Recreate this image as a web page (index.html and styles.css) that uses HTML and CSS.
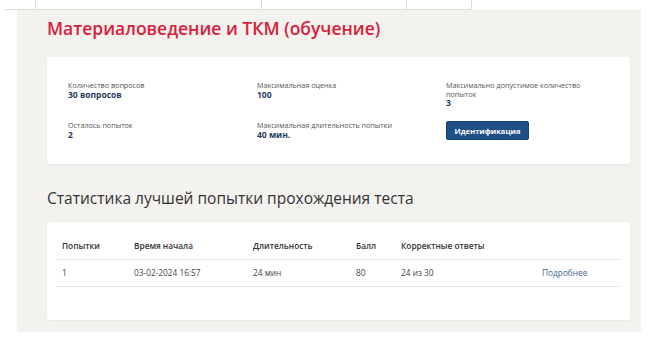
FILE: index.html
```html
<!DOCTYPE html>
<html lang="ru">
<head>
    <meta charset="UTF-8">
    <meta name="viewport" content="width=device-width, initial-scale=1.0">
    <title>Материаловедение и ТКМ (обучение)</title>
    <link rel="stylesheet" href="styles.css">
</head>
<body>
    <div class="top-strip">
        <div class="strip-cell cell-a"></div>
        <div class="strip-cell cell-b"></div>
        <div class="strip-cell cell-c"></div>
        <div class="strip-cell cell-d"></div>
    </div>

    <div class="panel">
        <h1 class="quiz-title">Материаловедение и ТКМ (обучение)</h1>

        <div class="card info-card">
            <div class="info-item">
                <div class="info-label">Количество вопросов</div>
                <div class="info-value">30 вопросов</div>
            </div>
            <div class="info-item">
                <div class="info-label">Максимальная оценка</div>
                <div class="info-value">100</div>
            </div>
            <div class="info-item">
                <div class="info-label">Максимально допустимое количество попыток</div>
                <div class="info-value">3</div>
            </div>
            <div class="info-item">
                <div class="info-label">Осталось попыток</div>
                <div class="info-value">2</div>
            </div>
            <div class="info-item">
                <div class="info-label">Максимальная длительность попытки</div>
                <div class="info-value">40 мин.</div>
            </div>
            <div class="info-item">
                <button class="btn-ident">Идентификация</button>
            </div>
        </div>

        <h2 class="section-title">Статистика лучшей попытки прохождения теста</h2>

        <div class="card stats-card">
            <table class="stats-table">
                <thead>
                    <tr>
                        <th class="col-try">Попытки</th>
                        <th class="col-start">Время начала</th>
                        <th class="col-dur">Длительность</th>
                        <th class="col-score">Балл</th>
                        <th class="col-correct">Корректные ответы</th>
                        <th class="col-link"></th>
                    </tr>
                </thead>
                <tbody>
                    <tr>
                        <td>1</td>
                        <td>03-02-2024 16:57</td>
                        <td>24 мин</td>
                        <td>80</td>
                        <td>24 из 30</td>
                        <td><a href="#" class="more-link">Подробнее</a></td>
                    </tr>
                </tbody>
            </table>
        </div>
    </div>
</body>
</html>
```

FILE: styles.css
```css
*, *::before, *::after {
    box-sizing: border-box;
}
body {
    margin: 0;
    padding: 0;
    background-color: #ffffff;
    font-family: "Open Sans", "Noto Sans", sans-serif;
    color: #333;
}

/* top table remains */
.top-strip {
    display: flex;
    height: 10px;
    margin-left: 4px;
}
.strip-cell {
    height: 10px;
    border-bottom: 1px solid #dcdcdc;
    border-right: 1px solid #dcdcdc;
}
.cell-a { width: 32px; }
.cell-b { width: 226px; }
.cell-c { width: 145px; }
.cell-d { width: 65px; }

.panel {
    margin-left: 17px;
    width: 624px;
    background-color: #f3f2ef;
    padding: 6px 11px 12px 30px;
}

.quiz-title {
    margin: 0;
    font-size: 17.5px;
    line-height: 24px;
    font-weight: 600;
    color: #d7213b;
}

.card {
    background-color: #fff;
    border-radius: 3px;
    box-shadow: 0 1px 2px rgba(0, 0, 0, 0.05);
}

.info-card {
    margin-top: 17px;
    height: 107px;
    padding: 24px 21px 0 21px;
    display: grid;
    grid-template-columns: 189px 189px 140px;
    row-gap: 13px;
    align-content: start;
}
.info-label {
    font-size: 7.2px;
    line-height: 8.5px;
    color: #555;
}
.info-value {
    font-size: 8.5px;
    line-height: 10px;
    font-weight: 700;
    color: #1f3a5c;
}
.btn-ident {
    display: block;
    width: 83px;
    height: 19px;
    padding: 0;
    border: 1px solid #173f68;
    border-radius: 2px;
    background-color: #1e5087;
    color: #fff;
    font-family: "Open Sans", sans-serif;
    font-size: 7.5px;
    font-weight: 700;
}

.section-title {
    margin: 23px 0 0 0;
    font-size: 15.5px;
    line-height: 22px;
    font-weight: 400;
    color: #333;
}

.stats-card {
    margin-top: 13px;
    height: 98px;
    padding: 10px 10px 0 9px;
}
.stats-table {
    width: 564px;
    border-collapse: collapse;
    font-size: 8.3px;
}
.stats-table th,
.stats-table td {
    height: 27px;
    padding: 0 6px;
    text-align: left;
    vertical-align: middle;
    border-bottom: 1px solid #e6e6e6;
}
.stats-table th {
    font-weight: 600;
    color: #333;
}
.stats-table td {
    color: #444;
}
.col-try { width: 72px; }
.col-start { width: 119px; }
.col-dur { width: 103px; }
.col-score { width: 45px; }
.col-correct { width: 141px; }
.more-link {
    color: #3a6891;
    text-decoration: none;
}
```
